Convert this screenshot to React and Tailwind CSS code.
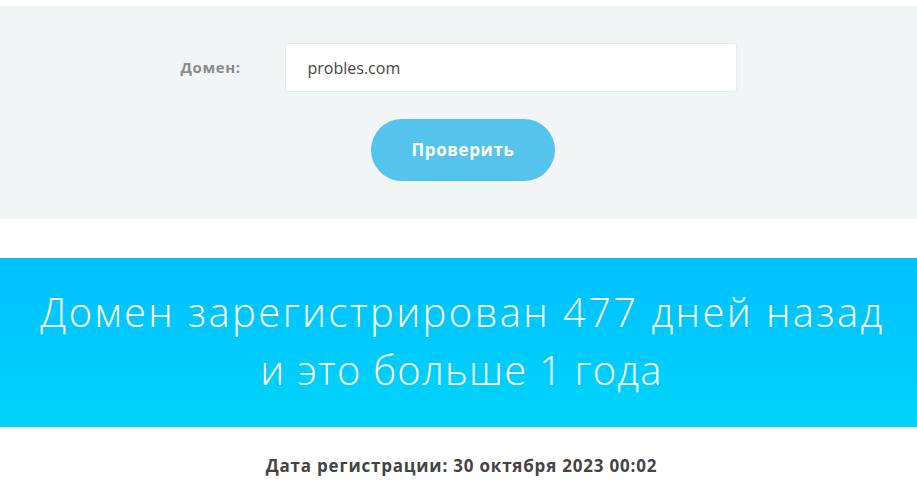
export default function App() {
  return (
    <div className="min-h-screen bg-white pt-[6px] font-['Open_Sans',sans-serif]">
      {/* FORM */}
      <div className="h-[213px] bg-[#f2f5f6] pt-[37px] flex flex-col items-center">
        <div className="flex items-center">
          <label className="w-[104px] text-[15px] font-bold text-[#8a8a8a] tracking-[0.6px]">Домен:</label>
          <input
            className="w-[452px] h-[49px] bg-white border border-[#e6eaec] rounded-[3px] px-[22px] text-[16px] text-[#444] outline-none"
            defaultValue="probles.com"
          />
        </div>
        <button className="mt-[27px] ml-[9px] w-[184px] h-[62px] rounded-full bg-[#55c4ec] text-white text-[17px] font-bold tracking-[0.6px]">
          Проверить
        </button>
      </div>

      {/* RESULT */}
      <div className="mt-[39px] h-[169px] bg-gradient-to-b from-[#00bfff] to-[#00d4fb] flex items-center justify-center pb-[4px]">
        <h2 className="flex flex-col items-center text-white text-[40px] leading-[58px] font-light">
          <span className="tracking-[2.4px] ml-[8px]">Домен зарегистрирован 477 дней назад</span>
          <span className="tracking-[1.2px] ml-[6px]">и это больше 1 года</span>
        </h2>
      </div>

      <p className="mt-[26px] text-center text-[17px] font-bold text-[#444] tracking-[0.8px] ml-[6px]">
        Дата регистрации: 30 октября 2023 00:02
      </p>
    </div>
  );
}
